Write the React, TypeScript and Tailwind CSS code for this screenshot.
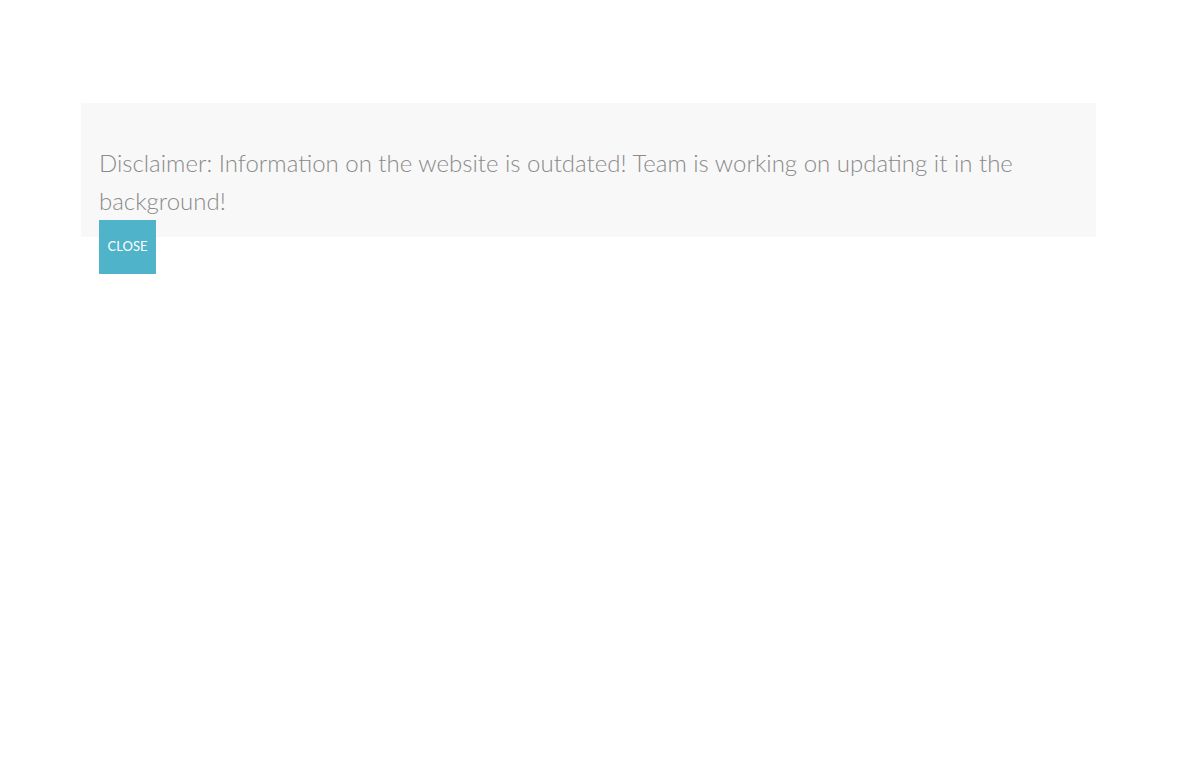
export default function App() {
    return (
        <div className="min-h-[773px] w-full bg-white pt-[103px] px-[81px]" style={{ fontFamily: 'Lato, "Open Sans", sans-serif' }}>
            <div className="w-[1015px] h-[134px] bg-[#f8f8f8] pt-[41px] px-[18px]">
                <p className="text-[24px] leading-[38px] font-light text-[#8a8a8a]">
                    Disclaimer: Information on the website is outdated! Team is working on updating it in the background!
                </p>
                <button className="w-[57px] h-[54px] bg-[#4fb3c9] text-white text-[13px] flex items-center justify-center">
                    CLOSE
                </button>
            </div>
        </div>
    )
}
